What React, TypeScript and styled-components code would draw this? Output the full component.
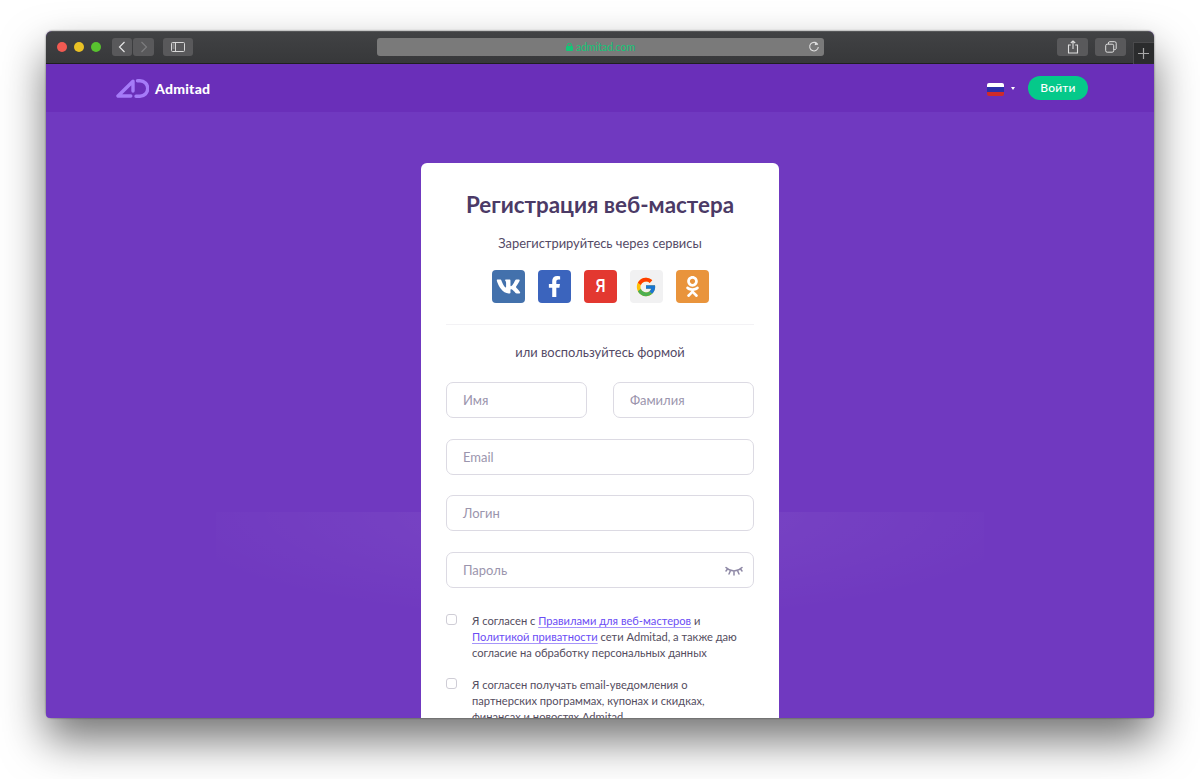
import React from 'react';
import styled, { createGlobalStyle } from 'styled-components';
import { FaVk, FaFacebookF, FaOdnoklassniki } from 'react-icons/fa';
import { FcGoogle } from 'react-icons/fc';

const GlobalStyle = createGlobalStyle`
  html, body {
    margin: 0;
    height: 100%;
    background: #ffffff;
    font-family: Lato, "Noto Sans", "Open Sans", sans-serif;
  }
  * { box-sizing: border-box; }
`;

const Stage = styled.div`
  width: 1200px;
  height: 779px;
  padding: 31px 46px 61px;
  overflow: hidden;
`;

const Window = styled.div`
  position: relative;
  height: 687px;
  border-radius: 6px 6px 4px 4px;
  overflow: hidden;
  display: flex;
  flex-direction: column;
  background: #7039c0;
`;

const WindowShadow = styled.div`
  border-radius: 6px;
  box-shadow: 0 22px 44px rgba(0, 0, 0, 0.55), 0 0 2px rgba(0, 0, 0, 0.6);
`;

const TitleBar = styled.div`
  flex: 0 0 33px;
  position: relative;
  display: flex;
  align-items: center;
  padding: 0 28px 2px 11px;
  background: linear-gradient(#414244, #37383a);
  border-top: 1px solid #565759;
  border-bottom: 1px solid #1f1f20;
`;

const Lights = styled.div`
  display: flex;
  gap: 7px;
  margin-right: 11px;
`;

const Light = styled.span<{ $color: string }>`
  width: 10px;
  height: 10px;
  border-radius: 50%;
  background: ${p => p.$color};
`;

const ToolButton = styled.div<{ $w: number; $gap?: number }>`
  width: ${p => p.$w}px;
  height: 18px;
  margin-right: ${p => p.$gap ?? 0}px;
  border-radius: 3px;
  background: #59595b;
  display: flex;
  align-items: center;
  justify-content: center;
  flex: none;
`;

const UrlBar = styled.div`
  position: relative;
  width: 447px;
  height: 18px;
  margin-right: 233px;
  flex: none;
  border-radius: 3px;
  background: #7a7a7a;
  display: flex;
  align-items: center;
  justify-content: center;
  gap: 3px;
  color: #13c677;
  font-size: 10.5px;
`;

const Reload = styled.svg`
  position: absolute;
  right: 3px;
  top: 2px;
`;

const NewTab = styled.div`
  position: absolute;
  right: 0;
  top: 10px;
  width: 21px;
  height: 22px;
  padding: 0 2px 1px 0;
  background: #2b2c2d;
  border-left: 1px solid #4a4a4c;
  border-top: 1px solid #4a4a4c;
  display: flex;
  align-items: center;
  justify-content: center;
`;

const Header = styled.header`
  flex: 0 0 48px;
  display: flex;
  align-items: center;
  padding: 0 66px 0 70px;
  background: #6a2fb9;
`;

const Brand = styled.div`
  display: flex;
  align-items: center;
  gap: 6px;
  color: #ffffff;
  font-size: 14px;
  font-weight: 900;
  letter-spacing: 0.25px;
`;

const HeaderRight = styled.div`
  margin-left: auto;
  display: flex;
  align-items: center;
`;

const Flag = styled.div`
  width: 17px;
  height: 13px;
  margin-top: 2px;
  border-radius: 2px;
  overflow: hidden;
  background: linear-gradient(#ffffff 0 33%, #2b2fa8 33% 66%, #cf2a2a 66%);
`;

const Caret = styled.span`
  width: 0;
  height: 0;
  margin: 1px 13px 0 7px;
  border-left: 2.5px solid transparent;
  border-right: 2.5px solid transparent;
  border-top: 3px solid #ffffff;
`;

const LoginButton = styled.button`
  width: 60px;
  height: 24px;
  padding: 0 0 2px;
  border: 0;
  border-radius: 12px;
  background: #05c98a;
  color: #ffffff;
  font: 500 12px Lato, "Noto Sans", sans-serif;
  letter-spacing: 0.2px;
`;

const Body = styled.main`
  position: relative;
  flex: 1;
  min-height: 0;
  display: flex;
  justify-content: center;
  padding-top: 51px;
`;

const Glow = styled.div`
  position: absolute;
  left: 170px;
  right: 170px;
  top: 400px;
  height: 110px;
  background: radial-gradient(ellipse 58% 100% at 50% 0, rgba(255, 255, 255, 0.07), rgba(255, 255, 255, 0));
`;

const Card = styled.section`
  position: relative;
  width: 358px;
  flex: none;
  align-self: flex-start;
  padding: 26px 25px 40px;
  border-radius: 6px 6px 0 0;
  background: #ffffff;
`;

const Title = styled.h1`
  margin: 0;
  text-align: center;
  color: #4b3a66;
  font-size: 22.4px;
  line-height: 32px;
  font-weight: 700;
`;

const Hint = styled.p<{ $top: number }>`
  margin: ${p => p.$top}px 0 0;
  text-align: center;
  color: #544a66;
  font-size: 12.9px;
  line-height: 18px;
`;

const Socials = styled.div`
  display: flex;
  justify-content: center;
  gap: 12.6px;
  margin-top: 18px;
  padding: 0 0 21px 1px;
  border-bottom: 1px solid #f3f2f5;
`;

const Social = styled.a<{ $bg: string }>`
  width: 33.4px;
  height: 33.4px;
  border-radius: 4px;
  display: flex;
  align-items: center;
  justify-content: center;
  background: ${p => p.$bg};
  color: #ffffff;
`;

const YandexLetter = styled.span`
  font: 700 18px "Liberation Sans", sans-serif;
  transform: scaleX(0.74);
`;

const Fields = styled.div`
  display: grid;
  grid-template-columns: 141px 141px;
  justify-content: space-between;
  row-gap: 20.6px;
  margin-top: 20.6px;
`;

const Field = styled.div<{ $wide?: boolean }>`
  position: relative;
  grid-column: ${p => (p.$wide ? '1 / -1' : 'auto')};
  height: 36px;
  padding: 0 16px;
  display: flex;
  align-items: center;
  border: 1px solid #dcdae3;
  border-bottom-width: 1.5px;
  border-radius: 7px;
  color: #9b95ad;
  font-size: 13px;
`;

const EyeIcon = styled.svg`
  position: absolute;
  right: 10px;
  top: 13px;
`;

const Consent = styled.div<{ $top: number }>`
  display: flex;
  align-items: flex-start;
  gap: 15px;
  margin-top: ${p => p.$top}px;
  color: #544d60;
  font-size: 11.15px;
  line-height: 16px;
`;

const ConsentText = styled.span`
  max-width: 270px;
`;

const Box = styled.span`
  flex: none;
  width: 11px;
  height: 11px;
  margin-top: 1px;
  border: 1px solid #cfcdd6;
  border-radius: 3px;
`;

const Terms = styled.a`
  color: #6b4df5;
  text-decoration: underline;
  text-decoration-color: #a695fa;
  text-underline-offset: 2px;
`;

export default function App() {
  return (
    <>
      <GlobalStyle />
      <Stage>
        <WindowShadow>
          <Window>
            <TitleBar>
              <Lights>
                <Light $color="#f25a52" />
                <Light $color="#e9c125" />
                <Light $color="#58c22f" />
              </Lights>
              <ToolButton $w={20} $gap={1}>
                <svg width="8" height="12" viewBox="0 0 8 12"><path d="M6.5 1 1.5 6l5 5" fill="none" stroke="#e4e4e4" strokeWidth="1.2" /></svg>
              </ToolButton>
              <ToolButton $w={21} $gap={9}>
                <svg width="8" height="12" viewBox="0 0 8 12"><path d="M1.5 1l5 5-5 5" fill="none" stroke="#7d7d7f" strokeWidth="1.2" /></svg>
              </ToolButton>
              <ToolButton $w={30} $gap={184}>
                <svg width="14" height="10" viewBox="0 0 14 10"><rect x=".5" y=".5" width="13" height="9" rx="1" fill="none" stroke="#d6d6d6" /><path d="M4.5 0v10" stroke="#d6d6d6" /><path d="M1.5 2h2M1.5 4h2M1.5 6h2" stroke="#a9a9a9" /></svg>
              </ToolButton>
              <UrlBar>
                <svg width="7" height="8" viewBox="0 0 7 8"><rect y="3" width="7" height="5" rx="1" fill="#13c677" /><path d="M1.5 3.5V2.2a2 2 0 0 1 4 0v1.3" fill="none" stroke="#13c677" /></svg>
                admitad.com
                <Reload width="14" height="14" viewBox="0 0 14 14"><path d="M10.8 4.6A4.3 4.3 0 1 0 11.3 7" fill="none" stroke="#dedede" strokeWidth="1.1" /><path d="M8 1.6l3.2 3-3.4.6z" fill="#dedede" /></Reload>
              </UrlBar>
              <ToolButton $w={31} $gap={7}>
                <svg width="12" height="14" viewBox="0 0 12 14"><path d="M3.8 5H1.5v8h9V5H8.2M6 9V1M3.8 3 6 .9 8.2 3" fill="none" stroke="#dedede" strokeWidth="1.1" /></svg>
              </ToolButton>
              <ToolButton $w={31}>
                <svg width="12" height="12" viewBox="0 0 12 12"><rect x=".7" y="3.2" width="8" height="8" rx="1.5" fill="none" stroke="#dedede" /><path d="M3.4 3V2a1.4 1.4 0 0 1 1.4-1.3h4.8A1.6 1.6 0 0 1 11.2 2.2V7A1.4 1.4 0 0 1 9 8.4" fill="none" stroke="#dedede" /></svg>
              </ToolButton>
              <NewTab>
                <svg width="11" height="11" viewBox="0 0 11 11"><path d="M5.5 0v11M0 5.5h11" stroke="#a8a8a8" strokeWidth="1.2" /></svg>
              </NewTab>
            </TitleBar>
            <Header>
              <Brand>
                <svg width="33" height="19" viewBox="0 0 33 19">
                  <path d="M2 17 17 2.200V12M2 17h12.800" fill="none" stroke="#a57bf8" strokeWidth="3.400" strokeLinejoin="round" strokeLinecap="round" />
                  <path d="M21.500 1.800h2.500a7.700 7.700 0 0 1 0 15.400h-4" fill="none" stroke="#a57bf8" strokeWidth="3.400" strokeLinecap="round" />
                </svg>
                Admitad
              </Brand>
              <HeaderRight>
                <Flag />
                <Caret />
                <LoginButton>Войти</LoginButton>
              </HeaderRight>
            </Header>
            <Body>
              <Glow />
              <Card>
                <Title>Регистрация веб-мастера</Title>
                <Hint $top={13}>Зарегистрируйтесь через сервисы</Hint>
                <Socials>
                  <Social $bg="#4371ac"><FaVk size={25} /></Social>
                  <Social $bg="#3b64bd"><FaFacebookF size={21} /></Social>
                  <Social $bg="#e33830"><YandexLetter>Я</YandexLetter></Social>
                  <Social $bg="#f1f1f2"><FcGoogle size={22} /></Social>
                  <Social $bg="#e9943c"><FaOdnoklassniki size={21} /></Social>
                </Socials>
                <Hint $top={18}>или воспользуйтесь формой</Hint>
                <Fields>
                  <Field>Имя</Field>
                  <Field>Фамилия</Field>
                  <Field $wide>Email</Field>
                  <Field $wide>Логин</Field>
                  <Field $wide>
                    Пароль
                    <EyeIcon width="18" height="10" viewBox="0 0 18 10">
                      <path d="M1 1.500c4.500 4.500 11.500 4.500 16 0M5.500 4.500 4 8M12.500 4.500 14 8M9 5.500V9M2.500 3 1 5M15.500 3 17 5" fill="none" stroke="#8f89a6" strokeWidth="1.500" strokeLinecap="round" />
                    </EyeIcon>
                  </Field>
                </Fields>
                <Consent $top={25.4}>
                  <Box />
                  <ConsentText>
                    Я согласен с <Terms>Правилами для веб-мастеров</Terms> и <Terms>Политикой приватности</Terms> сети Admitad, а также даю согласие на обработку персональных данных
                  </ConsentText>
                </Consent>
                <Consent $top={16}>
                  <Box />
                  <ConsentText>Я согласен получать email-уведомления о партнерских программах, купонах и скидках, финансах и новостях Admitad</ConsentText>
                </Consent>
              </Card>
            </Body>
          </Window>
        </WindowShadow>
      </Stage>
    </>
  );
}
